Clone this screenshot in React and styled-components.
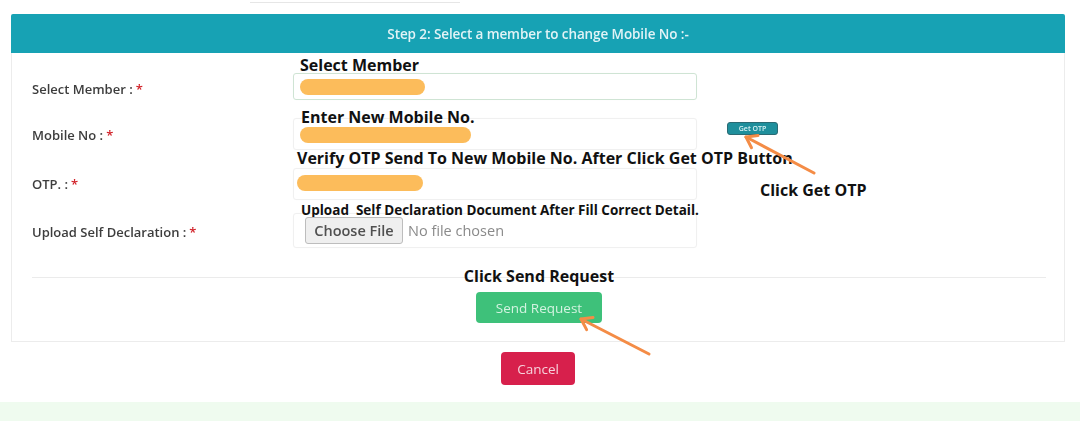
import styled, { createGlobalStyle } from "styled-components";

const GlobalStyle = createGlobalStyle`
  html, body {
    margin: 0;
    padding: 0;
    background: #ffffff;
  }
  body {
    font-family: "Open Sans", "Noto Sans", sans-serif;
    overflow: hidden;
  }
`;

const Page = styled.div`
  position: relative;
  width: 1080px;
  height: 421px;
  overflow: hidden;
  display: flex;
  flex-direction: column;
`;

const TopStub = styled.div`
  margin-left: 250px;
  width: 210px;
  height: 2px;
  border-bottom: 1px solid #e6e6e6;
`;

const Panel = styled.div`
  margin: 11px 15px 0 11px;
`;

const Header = styled.div`
  height: 39px;
  background: #17a2b4;
  border-radius: 2px 2px 0 0;
  display: flex;
  align-items: center;
  justify-content: center;
  color: #e2f3f6;
  font-size: 13.5px;
  font-weight: 600;
  letter-spacing: -0.1px;
  filter: blur(0.35px);
`;

const Body = styled.div`
  border: 1px solid #ececec;
  border-top: none;
  padding: 3px 18px 18px 20px;
`;

const Row = styled.div`
  display: grid;
  grid-template-columns: 261px 1fr;
  align-items: end;
  margin-top: ${(p) => p.$top || 0}px;
`;

const Label = styled.div`
  box-sizing: border-box;
  height: ${(p) => p.$h}px;
  padding-top: ${(p) => p.$shift || 0}px;
  display: flex;
  align-items: center;
  font-size: 13px;
  font-weight: 600;
  color: #3d3d3d;
  filter: blur(0.4px);
`;

const Star = styled.span`
  color: #d2232a;
  margin-left: 3px;
`;

const FieldCol = styled.div`
  display: flex;
  flex-direction: column;
`;

const Note = styled.div`
  font-size: ${(p) => p.$size || 16}px;
  line-height: ${(p) => (p.$size ? 15 : 18)}px;
  font-weight: 700;
  color: #111111;
  white-space: pre;
  padding-left: ${(p) => p.$indent || 0}px;
  margin-bottom: ${(p) => p.$mb || 0}px;
  position: relative;
`;

const InputLine = styled.div`
  display: flex;
  align-items: flex-start;
`;

const InputBox = styled.div`
  box-sizing: border-box;
  width: 404px;
  height: ${(p) => p.$h}px;
  border: ${(p) => (p.$active ? "1.5px solid #cfe4d4" : "1px solid #f0f0f0")};
  border-radius: 3px;
  display: flex;
  align-items: ${(p) => (p.$center ? "center" : "flex-start")};
  padding-left: ${(p) => p.$pad || 0}px;
  box-shadow: 0 0 1px rgba(0, 0, 0, 0.04);
`;

const Pill = styled.div`
  width: ${(p) => p.$w}px;
  height: 16px;
  border-radius: 8px;
  background: #fcbc5b;
  margin-left: ${(p) => p.$left}px;
  margin-top: ${(p) => p.$top}px;
`;

const GetOtp = styled.div`
  box-sizing: border-box;
  margin-left: 30px;
  margin-top: 4px;
  width: 51px;
  height: 13px;
  background: #1f8f9c;
  border: 1px solid #2b6a73;
  border-radius: 3px;
  color: #d9f2f4;
  font-size: 7px;
  font-weight: 600;
  display: flex;
  align-items: center;
  justify-content: center;
  filter: blur(0.3px);
`;

const SideNote = styled(Note)`
  margin-left: 63px;
  margin-top: 13px;
`;

const FileButton = styled.div`
  box-sizing: border-box;
  width: 98px;
  height: 27px;
  background: #efefef;
  border: 1px solid #bdbdbd;
  border-radius: 3px;
  color: #505050;
  font-size: 14.5px;
  font-weight: 600;
  display: flex;
  align-items: center;
  justify-content: center;
  filter: blur(0.4px);
`;

const NoFile = styled.span`
  margin-left: 5px;
  font-size: 14.5px;
  color: #8a8a8a;
  filter: blur(0.35px);
`;

const Divider = styled.div`
  height: 1px;
  background: #ebebeb;
  margin-top: 29px;
`;

const Footer = styled.div`
  display: flex;
  flex-direction: column;
  align-items: center;
`;

const SendNote = styled(Note)`
  margin-top: -11px;
`;

const Button = styled.div`
  box-sizing: border-box;
  width: ${(p) => p.$w}px;
  height: ${(p) => p.$h}px;
  border-radius: 4px;
  background: ${(p) => p.$bg};
  color: ${(p) => p.$fg};
  font-size: 13.5px;
  font-weight: 500;
  display: flex;
  align-items: center;
  justify-content: center;
  filter: blur(0.4px);
`;

const SendButton = styled(Button)`
  margin-top: 7px;
`;

const CancelRow = styled.div`
  display: flex;
  justify-content: center;
  margin: 10px 15px 0 11px;
`;

const BottomStrip = styled.div`
  margin-top: 17px;
  flex: 1;
  background: #effbef;
`;

const Overlay = styled.svg`
  position: absolute;
  top: 0;
  left: 0;
  pointer-events: none;
`;

function Arrow({ tail, tip, wings }) {
  return (
    <g stroke="#f48c46" strokeWidth="3" strokeLinecap="round" fill="none">
      <line x1={tail[0]} y1={tail[1]} x2={tip[0]} y2={tip[1]} />
      <polyline
        points={`${wings[0][0]},${wings[0][1]} ${tip[0]},${tip[1]} ${wings[1][0]},${wings[1][1]}`}
        strokeLinejoin="round"
      />
    </g>
  );
}

export default function App() {
  return (
    <>
      <GlobalStyle />
      <Page>
        <TopStub />
        <Panel>
          <Header>Step 2: Select a member to change Mobile No :-</Header>
          <Body>
            <Row>
              <Label $h={27} $shift={5}>
                Select Member :<Star>*</Star>
              </Label>
              <FieldCol>
                <Note $indent={7} $mb={-1}>Select Member</Note>
                <InputLine>
                  <InputBox $h={27} $active>
                    <Pill $w={125} $left={6} $top={4.5} />
                  </InputBox>
                </InputLine>
              </FieldCol>
            </Row>

            <Row $top={8}>
              <Label $h={32} $shift={2}>
                Mobile No :<Star>*</Star>
              </Label>
              <FieldCol>
                <Note $indent={8} $mb={-8}>Enter New Mobile No.</Note>
                <InputLine>
                  <InputBox $h={32}>
                    <Pill $w={171} $left={6} $top={8} />
                  </InputBox>
                  <GetOtp>Get OTP</GetOtp>
                </InputLine>
              </FieldCol>
            </Row>

            <Row $top={-1}>
              <Label $h={32}>
                OTP. :<Star>*</Star>
              </Label>
              <FieldCol>
                <Note $indent={4} $mb={1}>
                  Verify OTP Send To New Mobile No. After Click Get OTP Button
                </Note>
                <InputLine>
                  <InputBox $h={32}>
                    <Pill $w={126} $left={3} $top={6} />
                  </InputBox>
                  <SideNote>Click Get OTP</SideNote>
                </InputLine>
              </FieldCol>
            </Row>

            <Row $top={3}>
              <Label $h={35} $shift={3}>
                Upload Self Declaration :<Star>*</Star>
              </Label>
              <FieldCol>
                <Note $size={13.5} $indent={8} $mb={-5}>
                  {"Upload  Self Declaration Document After Fill Correct Detail."}
                </Note>
                <InputLine>
                  <InputBox $h={35} $pad={11} $center>
                    <FileButton>Choose File</FileButton>
                    <NoFile>No file chosen</NoFile>
                  </InputBox>
                </InputLine>
              </FieldCol>
            </Row>

            <Divider />
            <Footer>
              <SendNote>Click Send Request</SendNote>
              <SendButton $w={126} $h={31} $bg="#3ec17a" $fg="#d3f3e0">
                Send Request
              </SendButton>
            </Footer>
          </Body>
        </Panel>

        <CancelRow>
          <Button $w={74} $h={33} $bg="#d7204c" $fg="#f6d2db">
            Cancel
          </Button>
        </CancelRow>
        <BottomStrip />

        <Overlay width="1080" height="421" viewBox="0 0 1080 421">
          <Arrow
            tail={[814, 173]}
            tip={[746, 137]}
            wings={[
              [758, 135.5],
              [751.5, 147.7],
            ]}
          />
          <Arrow
            tail={[649, 354]}
            tip={[581, 319]}
            wings={[
              [593, 317.4],
              [586.6, 329.6],
            ]}
          />
        </Overlay>
      </Page>
    </>
  );
}
